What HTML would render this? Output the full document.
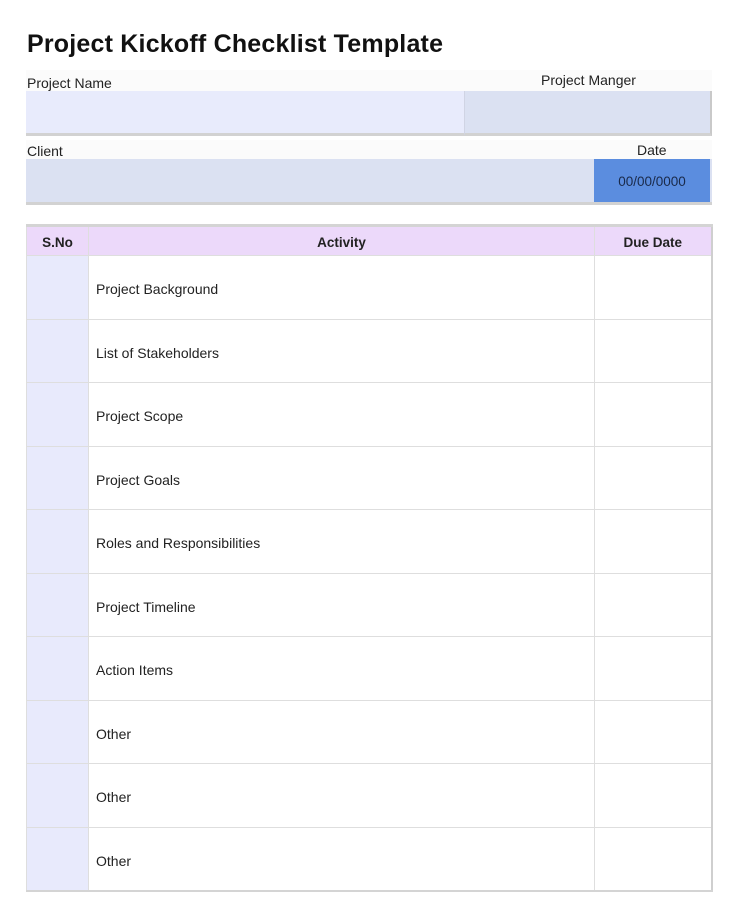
<!DOCTYPE html>
<html><head><style>
*{margin:0;padding:0;box-sizing:border-box}
body{width:732px;height:921px;background:#fff;font-family:"Liberation Sans",sans-serif;color:#222;position:relative;overflow:hidden}
.a{position:absolute}
h1{position:absolute;left:27px;top:30px;font-size:25px;font-weight:bold;color:#111;letter-spacing:0.2px}
.lbl{font-size:14px;color:#222}
table{position:absolute;left:26px;top:224px;width:685px;border-collapse:collapse;border-top:3px solid #d4d4d4;border-right:2px solid #cfcfcf;border-bottom:2px solid #d4d4d4;table-layout:fixed}
td,th{border:1px solid #dedede;font-size:14px}
th{background:#ecd9fa;height:30px;font-weight:bold;font-size:13.5px;padding-top:2px}
td{height:63.5px;padding-top:4px}
td.t{padding-left:7px}
</style></head><body>
<h1>Project Kickoff Checklist Template</h1>
<div class="a" style="left:26px;top:70px;width:686px;height:21px;background:#fbfbfb"></div>
<div class="a lbl" style="left:27px;top:75px">Project Name</div>
<div class="a lbl" style="left:541px;top:72px">Project Manger</div>
<div class="a" style="left:26px;top:91px;width:438px;height:45px;background:#e8ebfc;border-bottom:3px solid #d2d2d2"></div>
<div class="a" style="left:464px;top:91px;width:248px;height:45px;background:#dbe1f2;border-bottom:3px solid #d2d2d2;border-right:2px solid #c9c9c9;border-left:1px solid #d0d4e4"></div>
<div class="a" style="left:26px;top:140px;width:686px;height:19px;background:#fbfbfb"></div>
<div class="a lbl" style="left:27px;top:143px">Client</div>
<div class="a lbl" style="left:637px;top:142px">Date</div>
<div class="a" style="left:26px;top:159px;width:686px;height:46px;background:#dbe1f2;border-bottom:3px solid #d2d2d2"></div>
<div class="a" style="left:594px;top:159px;width:116px;height:43px;background:#5b8ddf;font-size:13.5px;color:#1a2a4a;text-align:center;line-height:46px">00/00/0000</div>
<table>
<colgroup><col style="width:62px"><col style="width:506px"><col style="width:117px"></colgroup>
<tr><th>S.No</th><th>Activity</th><th>Due Date</th></tr>
<tr><td style="background:#e8eafc"></td><td class="t">Project Background</td><td></td></tr>
<tr><td style="background:#e8eafc"></td><td class="t">List of Stakeholders</td><td></td></tr>
<tr><td style="background:#e8eafc"></td><td class="t">Project Scope</td><td></td></tr>
<tr><td style="background:#e8eafc"></td><td class="t">Project Goals</td><td></td></tr>
<tr><td style="background:#e8eafc"></td><td class="t">Roles and Responsibilities</td><td></td></tr>
<tr><td style="background:#e8eafc"></td><td class="t">Project Timeline</td><td></td></tr>
<tr><td style="background:#e8eafc"></td><td class="t">Action Items</td><td></td></tr>
<tr><td style="background:#e8eafc"></td><td class="t">Other</td><td></td></tr>
<tr><td style="background:#e8eafc"></td><td class="t">Other</td><td></td></tr>
<tr><td style="background:#e8eafc"></td><td class="t">Other</td><td></td></tr>
</table>
</body></html>
